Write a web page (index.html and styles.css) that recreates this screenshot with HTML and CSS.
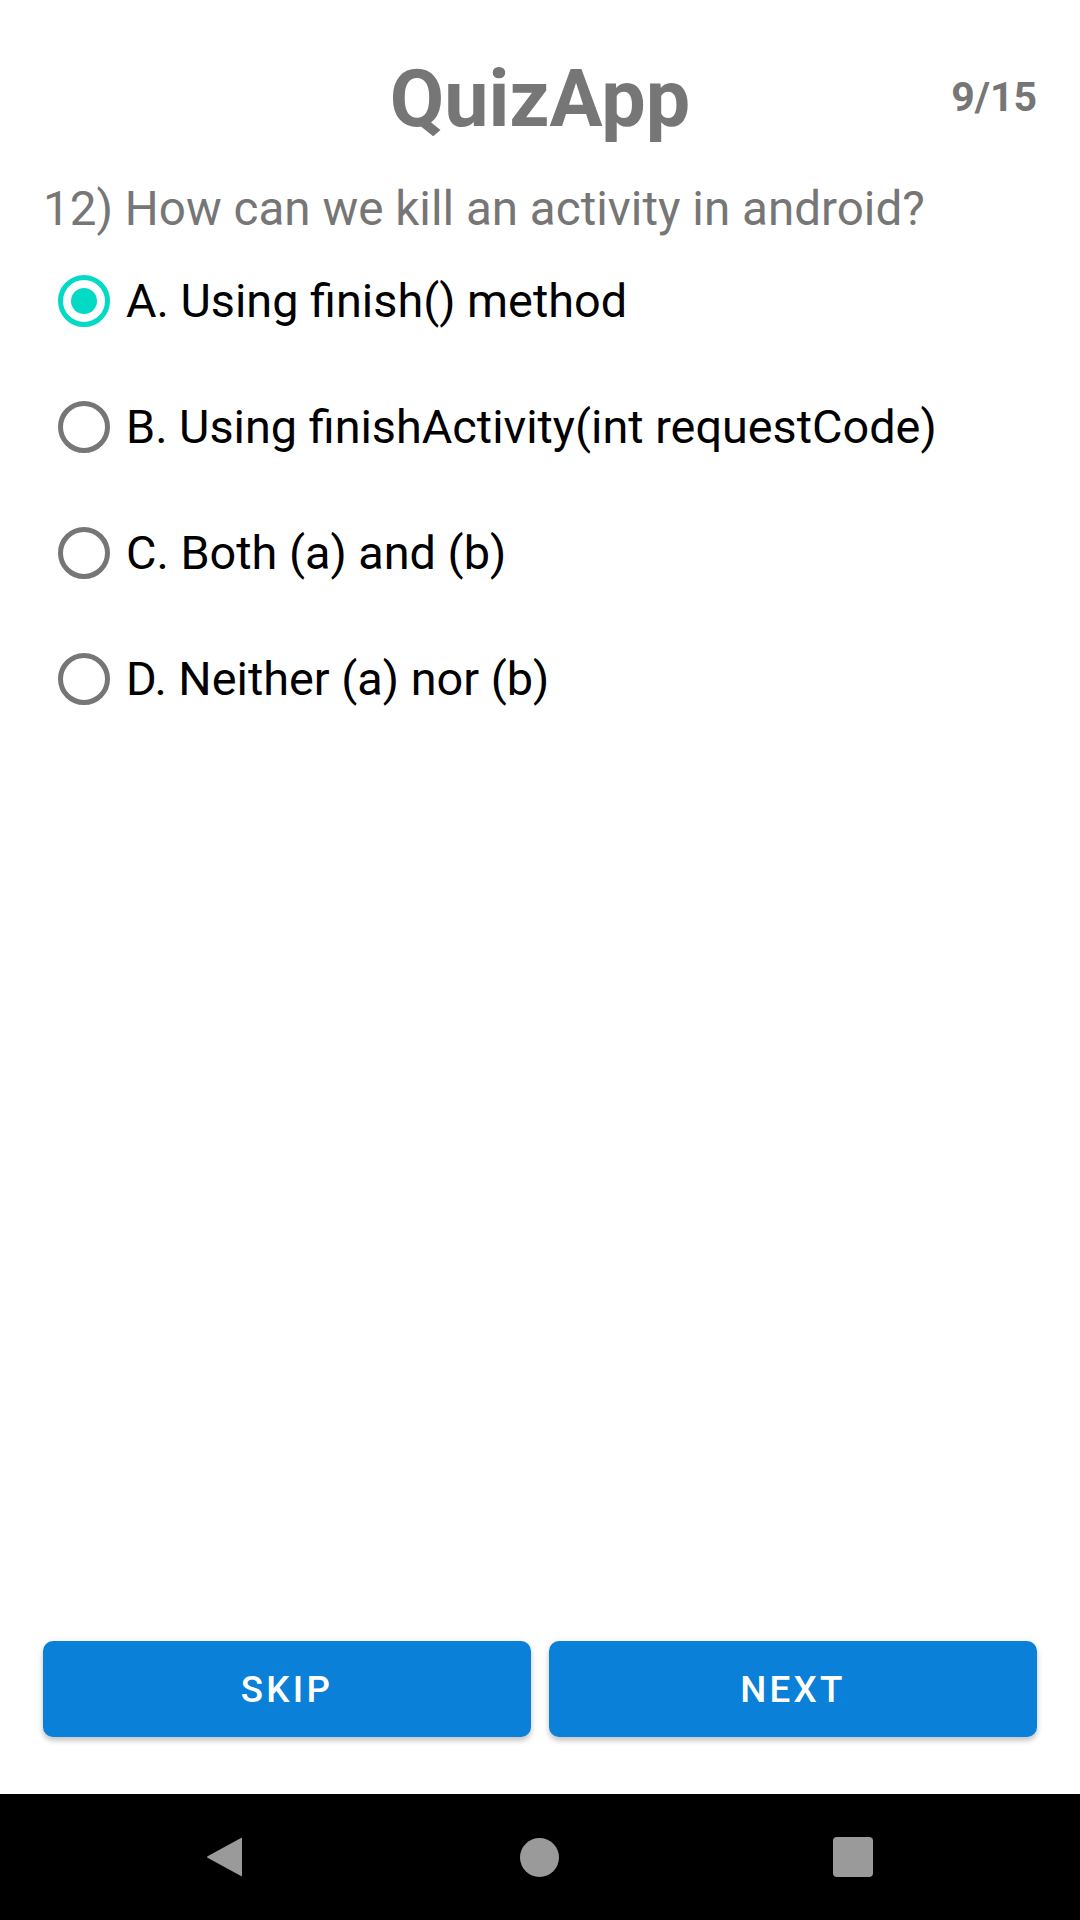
FILE: index.html
```html
<!DOCTYPE html>
<html lang="en">
<head>
<meta charset="utf-8">
<title>QuizApp</title>
<link rel="stylesheet" href="styles.css">
</head>
<body>
<div class="screen">
  <main class="content">
    <header class="header">
      <div></div>
      <h1 class="title">QuizApp</h1>
      <div class="counter">9/15</div>
    </header>
    <p class="question">12) How can we kill an activity in android?</p>
    <div class="options">
      <label class="option checked"><span class="radio"></span><span class="option-text">A. Using finish() method</span></label>
      <label class="option"><span class="radio"></span><span class="option-text">B. Using finishActivity(int requestCode)</span></label>
      <label class="option"><span class="radio"></span><span class="option-text">C. Both (a) and (b)</span></label>
      <label class="option"><span class="radio"></span><span class="option-text">D. Neither (a) nor (b)</span></label>
    </div>
    <div class="spacer"></div>
    <div class="actions">
      <button class="btn">SKIP</button>
      <button class="btn">NEXT</button>
    </div>
  </main>
  <nav class="navbar">
    <svg class="nav-icon" width="40" height="44" viewBox="0 0 40 44"><path d="M36 3 Q37 2 37 4 L37 40 Q37 42 36 41 L3 23 Q1 22 3 21 Z" fill="#9a9a9a"/></svg>
    <span class="nav-home"></span>
    <span class="nav-recent"></span>
  </nav>
</div>
</body>
</html>
```
FILE: styles.css
```css
* { box-sizing: border-box; }
html, body {
  margin: 0;
  padding: 0;
  background: #ffffff;
}
body {
  width: 1080px;
  height: 1920px;
  font-family: Roboto, "Liberation Sans", sans-serif;
  overflow: hidden;
}
.screen {
  display: flex;
  flex-direction: column;
  height: 1920px;
}
.content {
  flex: 1;
  display: flex;
  flex-direction: column;
  padding: 0 43px 57px 43px;
}
.header {
  display: grid;
  grid-template-columns: 1fr auto 1fr;
  align-items: start;
  padding-top: 53px;
}
.title {
  margin: 0;
  font-size: 79px;
  font-weight: 700;
  line-height: normal;
  color: #767676;
}
.counter {
  justify-self: end;
  margin-top: 20px;
  font-size: 41px;
  font-weight: 700;
  line-height: normal;
  color: #767676;
}
.question {
  margin: 36px 0 0 0;
  font-size: 47.6px;
  font-weight: 400;
  line-height: normal;
  color: #767676;
}
.options {
  display: flex;
  flex-direction: column;
  margin-top: 1px;
}
.option {
  display: flex;
  align-items: center;
  height: 126px;
  padding-left: 15px;
}
.radio {
  width: 52px;
  height: 52px;
  border-radius: 50%;
  border: 5px solid #767676;
  flex-shrink: 0;
  display: flex;
  align-items: center;
  justify-content: center;
}
.option.checked .radio {
  border-color: #03dac5;
}
.option.checked .radio::after {
  content: "";
  width: 26px;
  height: 26px;
  border-radius: 50%;
  background: #03dac5;
}
.option-text {
  margin-left: 16px;
  font-size: 46.8px;
  line-height: normal;
  color: #000000;
}
.spacer { flex: 1; }
.actions {
  display: grid;
  grid-template-columns: 1fr 1fr;
  gap: 18px;
}
.btn {
  height: 96px;
  border: none;
  border-radius: 10px;
  background: #0a80d8;
  color: #ffffff;
  font-family: Roboto, "Liberation Sans", sans-serif;
  font-size: 36.75px;
  font-weight: 500;
  letter-spacing: 3.3px;
  box-shadow: 0 4px 5px rgba(0,0,0,0.18), 0 1px 8px rgba(0,0,0,0.08);
}
.navbar {
  height: 126px;
  background: #000000;
  display: flex;
  align-items: center;
  justify-content: space-between;
  padding: 0 207px 0 205px;
}
.nav-icon { display: block; }
.nav-home {
  width: 39px;
  height: 39px;
  border-radius: 50%;
  background: #9a9a9a;
}
.nav-recent {
  width: 40px;
  height: 40px;
  border-radius: 4px;
  background: #9a9a9a;
}
```
